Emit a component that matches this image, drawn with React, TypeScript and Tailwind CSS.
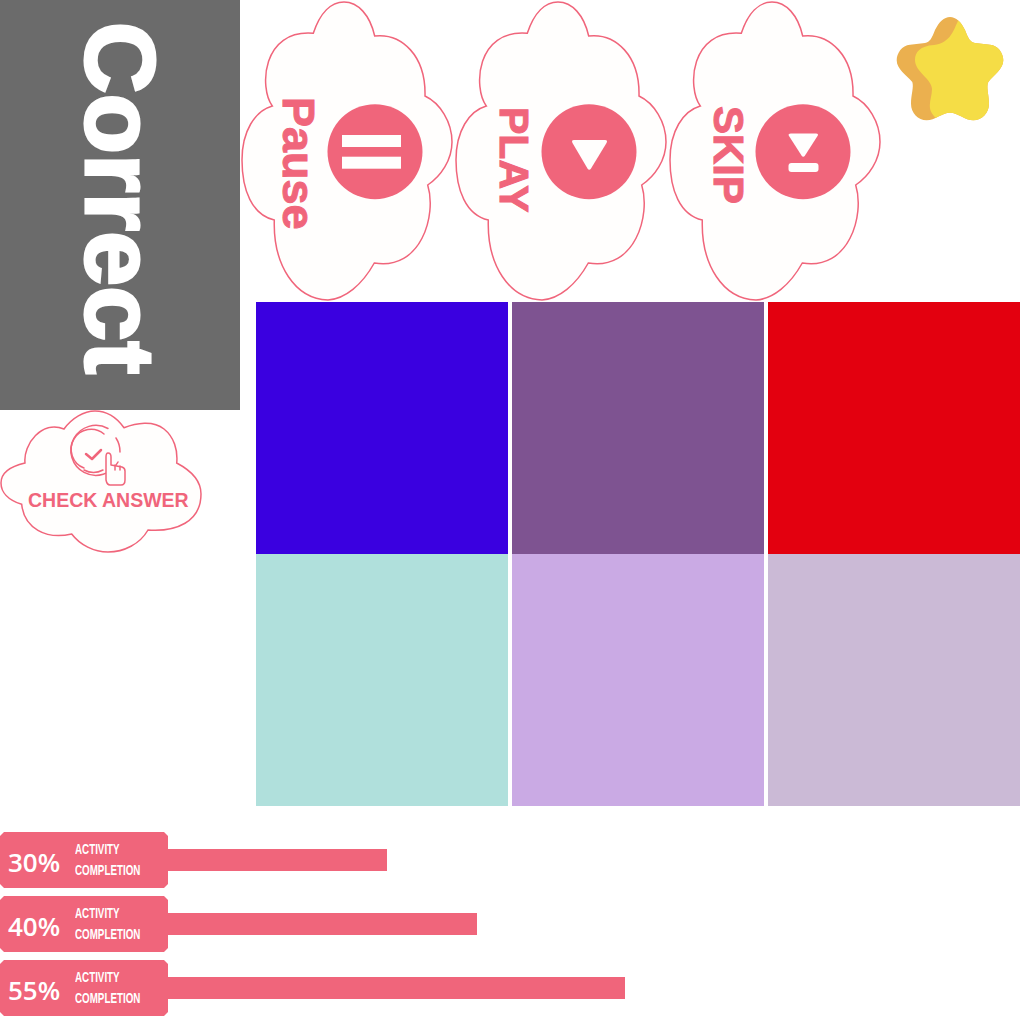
import React from 'react';

const PINK = '#f0657b';
const CLOUD_PATH =
    'M73.3 33.3C80 13 91 2 104 2C118 2 130 15 134.7 36C162 33 186 56 185 96C200 103 212 122 212 142C212 160 201 176 187.7 185C197 215 181 271 134.3 263C122 285 105 299 88 300C55 299 33 265 34.3 220C12 215 2 190 2 160C2 131 15 111 32.3 106C19 88 22 29 73.3 33.3Z';
const BIG_CLOUD_PATH =
    'M64 19C72 8 84 1 95 1C107 1 117 8 124 17.7C136 13 153 10 164 19C174 27 178 40 176.7 53C190 60 201 70 201 84C201 112 176 122 148 120C140 134 124 142 108 142C94 142 80 135 71.7 124C46 130 24 118 21.7 94.3C8 90 1 82 1 73C1 62 12 56 25 53C23 34 42 10 64 19Z';
const STAR_PATH =
    'M39 13C43 5 48 0 54 0C60 0 65 5 69 13C72 21 74 25 79 26L94 27.7C102 28.5 107.3 36 107.3 43.3C107.3 52 98 58 92.3 65C90 70 93 78 93 86.7C93 96 86 103.3 77.3 103.3C69 103.3 62 95.7 54 95.7C46 95.7 39 103.3 30.7 103.3C22 103.3 15 96 15 86.7C15 78 18 70 16.3 65C10 58 .7 52 .7 43.3C.7 36 6 28.5 14 27.7L29 26C34 25 36 21 39 13Z';

const HEAVY = "font-['Liberation_Sans',sans-serif] font-bold [-webkit-text-stroke:1px_#f0657b]";

interface CloudButtonProps {
    label: string;
    labelClass: string;
    children: React.ReactNode;
}

const CloudButton: React.FC<CloudButtonProps> = ({ label, labelClass, children }) => (
    <div className="relative w-[214px] h-[302px] shrink-0">
        <svg width="214" height="302" viewBox="0 0 214 302" className="block">
            <path d={CLOUD_PATH} fill="#fffefd" stroke={PINK} strokeWidth="1.5" />
            <circle cx="135" cy="151.7" r="47.5" fill={PINK} />
            {children}
        </svg>
        <span className={`absolute [writing-mode:vertical-rl] leading-none text-[#f0657b] ${HEAVY} ${labelClass}`}>
            {label}
        </span>
    </div>
);

const ProgressRow: React.FC<{ percent: string; barWidth: number }> = ({ percent, barWidth }) => (
    <div className="flex items-center h-14">
        <div className="w-[168px] h-14 bg-[#f0657b] text-white flex items-center [clip-path:polygon(4px_0,164px_0,168px_4px,168px_52px,164px_56px,4px_56px,0_52px,0_4px)]">
            <span className="w-[78px] pl-2 pt-1 text-[26px] font-semibold font-['Open_Sans',sans-serif]">{percent}</span>
            <div className="flex flex-col font-['Liberation_Sans',sans-serif] font-bold text-sm leading-[21px] origin-left scale-x-70 whitespace-nowrap">
                <span>ACTIVITY</span>
                <span>COMPLETION</span>
            </div>
        </div>
        <div className="h-[22px] bg-[#f0657b]" style={{ width: barWidth }} />
    </div>
);

const App: React.FC = () => {
    return (
        <div className="w-[1024px] h-[1024px] bg-white overflow-hidden">
            <div className="flex">
                <div className="w-[240px] shrink-0">
                    <div className="h-[410px] bg-[#6b6b6b] flex justify-center pt-[22px] pl-[1px]">
                        <span className="[writing-mode:vertical-rl] text-white text-[99px] leading-none font-bold font-['Liberation_Sans',sans-serif] [-webkit-text-stroke:3px_white]">
                            Correct
                        </span>
                    </div>
                    <div className="relative h-[146px]">
                        <svg width="204" height="146" viewBox="0 0 204 146" className="block">
                            <path d={BIG_CLOUD_PATH} fill="#fffefd" stroke={PINK} strokeWidth="1.5" />
                            <g fill="none" stroke={PINK} strokeWidth="1.5" strokeLinecap="round" strokeLinejoin="round">
                                <path d="M108 18.5A25 25 0 1 0 118 52" />
                                <path d="M116 28A25 25 0 0 1 120 42" />
                                <path d="M104 24A20 20 0 1 0 84 58" />
                                <path d="M84 60A20 20 0 0 0 103 60" />
                                <path d="M86 44L92 49L101 40" strokeWidth="2.5" />
                                <path d="M106 70V47Q106 43 108 43Q111 43 111 47V55L122 57Q125 58 125 61V70Q125 75 121 75H110Q107 75 106 70Z" fill="#fffefd" />
                                <path d="M115 55V60M120 56V60" />
                            </g>
                        </svg>
                        <span className="absolute left-[28px] top-[81px] text-[19.5px] leading-none font-bold whitespace-nowrap text-[#f0657b] font-['Liberation_Sans',sans-serif]">
                            CHECK ANSWER
                        </span>
                    </div>
                </div>

                <div className="flex-1">
                    <div className="flex h-[302px]">
                        <CloudButton label="Pause" labelClass="left-[36px] top-[97px] text-[45px]">
                            <rect x="102" y="135" width="59" height="12" fill="#fffefd" />
                            <rect x="102" y="156.7" width="59" height="12" fill="#fffefd" />
                        </CloudButton>
                        <CloudButton label="PLAY" labelClass="left-[39px] top-[107px] text-[41px]">
                            <path d="M120 140H151Q154 140 152.5 143L137 168.5Q135.3 171 133.5 168.5L118.5 143Q117 140 120 140Z" fill="#fffefd" />
                        </CloudButton>
                        <CloudButton label="SKIP" labelClass="left-[39px] top-[106px] text-[42px]">
                            <path d="M123 133.5H148Q151 133.5 149.5 136L137 155.5Q135.3 158 133.5 155.5L121 136Q119.5 133.5 123 133.5Z" fill="#fffefd" />
                            <rect x="120.5" y="163" width="30" height="9" rx="3" fill="#fffefd" />
                        </CloudButton>
                        <svg width="108" height="104" viewBox="0 0 108 104" className="ml-[14px] mt-[17px]">
                            <defs>
                                <clipPath id="star-clip">
                                    <path d={STAR_PATH} />
                                </clipPath>
                            </defs>
                            <path d={STAR_PATH} fill="#ebb04f" />
                            <path
                                d="M62.3 3.3C58 12 55 26 38 28C24 29 19 35 19 43C19 55 36 62 36 72C36 82 29 92 40 101L120 120V0Z"
                                fill="#f5dd46"
                                clipPath="url(#star-clip)"
                            />
                        </svg>
                    </div>
                    <div className="ml-4 w-[764px] grid grid-cols-3 gap-x-1">
                        <div className="h-[252px] bg-[#3a00e0]" />
                        <div className="h-[252px] bg-[#7e5391]" />
                        <div className="h-[252px] bg-[#e3000f]" />
                        <div className="h-[252px] bg-[#b0e0dc]" />
                        <div className="h-[252px] bg-[#caaae4]" />
                        <div className="h-[252px] bg-[#cbbad6]" />
                    </div>
                </div>
            </div>

            <div className="mt-[26px] flex flex-col gap-2">
                <ProgressRow percent="30%" barWidth={219} />
                <ProgressRow percent="40%" barWidth={309} />
                <ProgressRow percent="55%" barWidth={457} />
            </div>
        </div>
    );
};

export default App;
